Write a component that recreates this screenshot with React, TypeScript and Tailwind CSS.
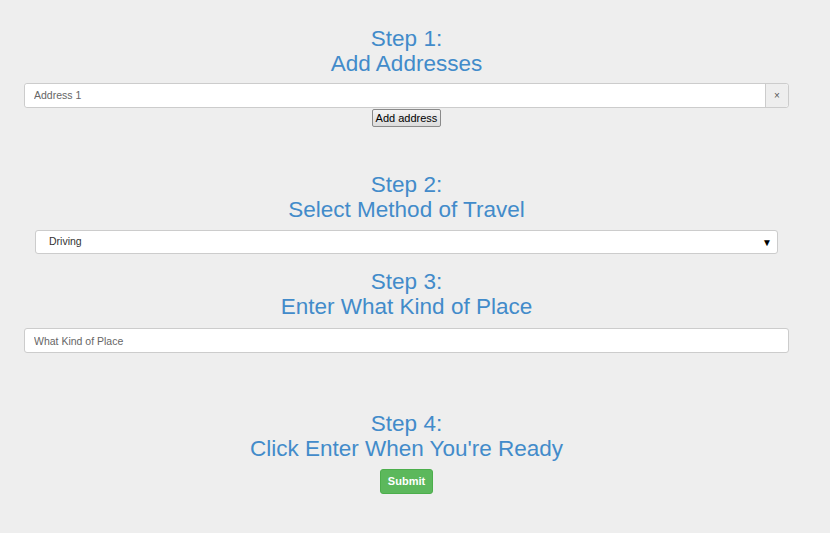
export default function App() {
  const heading = 'text-center text-[22.5px] leading-[25px] text-[#428bca]';

  return (
    <div className="min-h-[533px] w-full bg-[#eeeeee] font-['Liberation_Sans',Arial,sans-serif]">
      <div className="flex w-[813px] flex-col pt-[26px]">
        {/* step 1 */}
        <h2 className={heading}>
          Step 1:
          <br />
          Add Addresses
        </h2>
        <div className="mx-[24px] mt-[7px] flex h-[25px] rounded-[3px] border border-[#ccc] bg-white">
          <input
            className="min-w-0 flex-1 rounded-l-[3px] bg-white px-[9px] text-[10.5px] text-[#555] outline-none placeholder:text-[#666]"
            placeholder="Address 1"
          />
          <span className="flex w-[23px] items-center justify-center rounded-r-[3px] border-l border-[#ccc] bg-[#eee] text-[10px] text-[#555]">
            ×
          </span>
        </div>
        <div className="flex justify-center pt-px">
          <button className="h-[18px] w-[69px] rounded-[2px] border border-[#8a8a8a] bg-[linear-gradient(#f3f3f3,#dcdcdc)] text-[11px] leading-none text-black">
            Add address
          </button>
        </div>

        {/* step 2 */}
        <h2 className={`${heading} mt-[45px]`}>
          Step 2:
          <br />
          Select Method of Travel
        </h2>
        <div className="mx-[35px] mt-[8px] flex h-[24px] items-center justify-between rounded-[3px] border border-[#ccc] bg-white pl-[13px] pr-[5px] text-[10.5px] text-[#333]">
          <span>Driving</span>
          <span className="text-[10px] text-black">▼</span>
        </div>

        {/* step 3 */}
        <h2 className={`${heading} mt-[15px]`}>
          Step 3:
          <br />
          Enter What Kind of Place
        </h2>
        <input
          className="mx-[24px] mt-[9px] h-[25px] rounded-[3px] border border-[#ccc] bg-white px-[9px] text-[10.5px] text-[#555] outline-none placeholder:text-[#666]"
          placeholder="What Kind of Place"
        />

        {/* step 4 */}
        <h2 className={`${heading} mt-[58px]`}>
          Step 4:
          <br />
          Click Enter When You're Ready
        </h2>
        <div className="mt-[8px] flex justify-center">
          <button className="h-[25px] w-[53px] rounded-[3px] border border-[#4cae4c] bg-[#5cb85c] text-[11px] font-bold text-white">
            Submit
          </button>
        </div>
      </div>
    </div>
  );
}
